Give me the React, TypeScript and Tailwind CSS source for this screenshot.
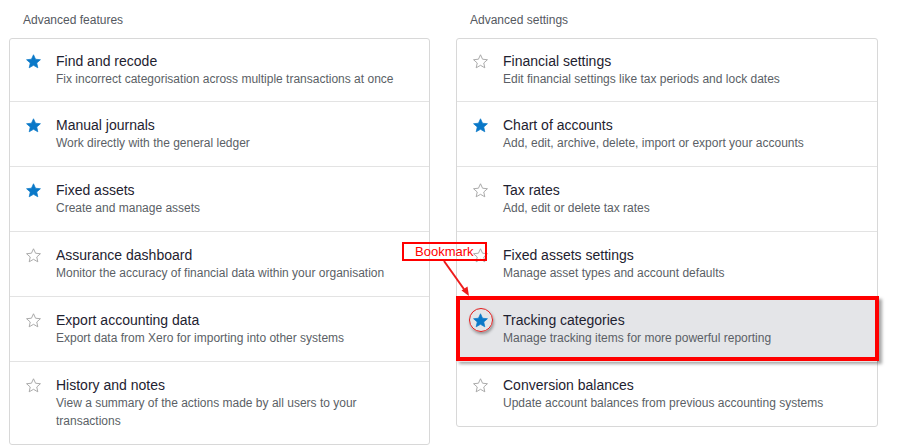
import React from "react";

type Item = { title: string; desc: string; starred?: boolean; highlight?: boolean };

const features: Item[] = [
  { title: "Find and recode", desc: "Fix incorrect categorisation across multiple transactions at once", starred: true },
  { title: "Manual journals", desc: "Work directly with the general ledger", starred: true },
  { title: "Fixed assets", desc: "Create and manage assets", starred: true },
  { title: "Assurance dashboard", desc: "Monitor the accuracy of financial data within your organisation" },
  { title: "Export accounting data", desc: "Export data from Xero for importing into other systems" },
  { title: "History and notes", desc: "View a summary of the actions made by all users to your transactions" },
];

const settings: Item[] = [
  { title: "Financial settings", desc: "Edit financial settings like tax periods and lock dates" },
  { title: "Chart of accounts", desc: "Add, edit, archive, delete, import or export your accounts", starred: true },
  { title: "Tax rates", desc: "Add, edit or delete tax rates" },
  { title: "Fixed assets settings", desc: "Manage asset types and account defaults" },
  { title: "Tracking categories", desc: "Manage tracking items for more powerful reporting", starred: true, highlight: true },
  { title: "Conversion balances", desc: "Update account balances from previous accounting systems" },
];

const STAR = "M12 2.5l2.9 6.3 6.9.7-5.2 4.6 1.5 6.8L12 17.4l-6.1 3.5 1.5-6.8-5.2-4.6 6.9-.7z";

const Star = ({ filled }: { filled?: boolean }) => (
  <svg width="17" height="17" viewBox="0 0 24 24" className="block">
    {filled ? (
      <path d={STAR} fill="#0a78c8" stroke="#0a78c8" strokeWidth="1" strokeLinejoin="round" />
    ) : (
      <path d={STAR} fill="none" stroke="#a3a3a3" strokeWidth="1.3" strokeLinejoin="round" />
    )}
  </svg>
);

const Row = ({ item }: { item: Item }) => (
  <div
    className={`relative flex border-t border-[#e3e3e3] first:border-t-0 pl-[15px] pr-4 py-[14px] first:py-[13px] ${
      item.highlight ? "bg-[#e4e5e8]" : ""
    }`}
  >
    <div className="w-[31px] shrink-0 pt-[1px] relative">
      {item.highlight && (
        <div className="absolute left-[-3px] top-[-3px] w-[24px] h-[24px] rounded-full border-[1.5px] border-[#e21b1b] shadow-[1px_2px_3px_rgba(0,0,0,0.35)]" />
      )}
      <Star filled={item.starred} />
    </div>
    <div className="min-w-0">
      <div className="text-[14px] leading-[18px] text-[#1e2230]">{item.title}</div>
      <div className="text-[12px] leading-[18px] text-[#5b5f66]">{item.desc}</div>
    </div>
    {item.highlight && (
      <div className="absolute left-[-1px] right-[-2px] top-[-1px] bottom-0 border-4 border-[#ff0000] shadow-[3px_3px_3px_rgba(0,0,0,0.35)] pointer-events-none" />
    )}
  </div>
);

const Column = ({ heading, items }: { heading: string; items: Item[] }) => (
  <div>
    <div className="pl-[14px] text-[12px] leading-[18px] text-[#55595f] mb-[9px]">{heading}</div>
    <div className="rounded-[3px] border border-[#d8d8d8] bg-white">
      {items.map((it) => (
        <Row key={it.title} item={it} />
      ))}
    </div>
  </div>
);

export default function App() {
  return (
    <div
      className="relative w-[900px] h-[445px] bg-white pl-[9px] pt-[11px] overflow-hidden"
      style={{ fontFamily: '"Liberation Sans", Arial, sans-serif' }}
    >
      <div className="grid grid-cols-[421px_422px] gap-x-[26px] items-start">
        <Column heading="Advanced features" items={features} />
        <Column heading="Advanced settings" items={settings} />
      </div>

      {/* Bookmark callout */}
      <div className="absolute left-[402px] top-[242px] w-[85px] h-[19px] border-2 border-[#ff0000] flex items-center pl-[11px] text-[13px] leading-none text-[#ff0000]">
        Bookmark
      </div>
      <svg className="absolute left-[436px] top-[258px]" width="44" height="44" viewBox="0 0 44 44">
        <line x1="8" y1="3" x2="30" y2="34" stroke="#ee1c1c" strokeWidth="2" />
        <path d="M33 38 L25.5 32.5 L31.5 28.5 Z" fill="#ee1c1c" />
      </svg>
    </div>
  );
}
